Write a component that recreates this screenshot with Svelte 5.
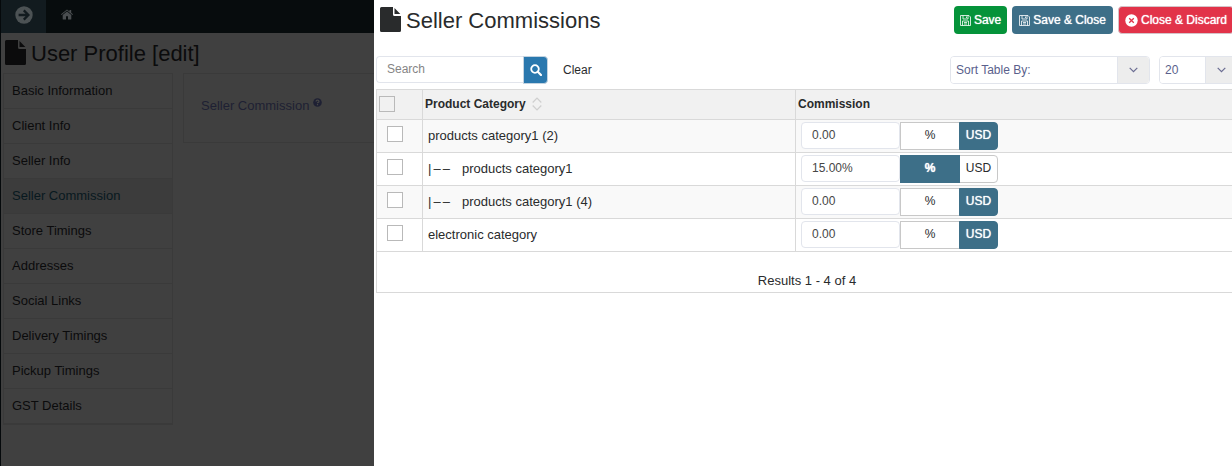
<script>
  const menu = ['Basic Information', 'Client Info', 'Seller Info', 'Seller Commission', 'Store Timings', 'Addresses', 'Social Links', 'Delivery Timings', 'Pickup Timings', 'GST Details'];
  let rows = $state([
    { name: 'products category1 (2)', child: false, value: '0.00', unit: 'USD' },
    { name: 'products category1', child: true, value: '15.00%', unit: '%' },
    { name: 'products category1 (4)', child: true, value: '0.00', unit: 'USD' },
    { name: 'electronic category', child: false, value: '0.00', unit: 'USD' }
  ]);
  let search = $state('');
</script>

{#snippet fileIcon()}
  <svg class="file" viewBox="0 0 21 25" aria-hidden="true">
    <path fill="currentColor" d="M1.500 0H13V7.500Q13 9 14.500 9H21V23.500Q21 25 19.500 25H1.500Q0 25 0 23.500V1.500Q0 0 1.500 0ZM14.500 1L20.300 7H14.500Z" />
  </svg>
{/snippet}

{#snippet disk()}
  <svg width="11" height="11" viewBox="0 0 11 11" fill="none" stroke="currentColor" aria-hidden="true">
    <path d="M.5.5H9L10.500 2V10.500H.5ZM3 .5V4H8V.5M6.500 1.500V3M2.500 10.500V6H8.500V10.500M4 7.500H7M4 9H7" stroke-width=".8" />
  </svg>
{/snippet}

{#snippet chevron()}
  <span class="arrow" aria-hidden="true">
    <svg width="9" height="6" viewBox="0 0 9 6" fill="none" stroke="#6a6c92" stroke-width="1.200"><path d="M.7.8L4.500 4.600L8.300.8" /></svg>
  </span>
{/snippet}

<div class="page">
  <div class="backdrop">
    <header class="topbar">
      <button class="toggle" aria-label="Toggle menu">
        <svg width="18" height="18" viewBox="0 0 18 18" aria-hidden="true">
          <circle cx="9" cy="9" r="8.700" fill="#4c5254" />
          <path d="M3.600 9H13M8.800 4.400L13.400 9L8.800 13.600" fill="none" stroke="#121b1f" stroke-width="2.300" />
        </svg>
      </button>
      <a class="home" href="#home" aria-label="Home">
        <svg width="12" height="11" viewBox="0 0 12 11" aria-hidden="true">
          <path fill="#4a4e50" d="M6 2.600L10.300 6.100V10Q10.300 10.500 9.800 10.500H7V7.300H5V10.500H2.200Q1.700 10.500 1.700 10V6.100ZM6 .4L8.500 2.400V1H10.200V3.800L12 5.300L11.400 6L6 1.600L.6 6L0 5.300Z" />
        </svg>
      </a>
    </header>
    <h1>{@render fileIcon()}User Profile [edit]</h1>
    <div class="columns">
      <nav>
        {#each menu as item}
          <a href="#section" class:active={item === 'Seller Commission'}>{item}</a>
        {/each}
      </nav>
      <section class="panel">
        <span>Seller Commission</span>
        <svg width="9" height="9" viewBox="0 0 9 9" aria-hidden="true">
          <circle cx="4.500" cy="4.500" r="4.300" fill="#1e2033" />
          <path d="M3 3.500Q3.100 2.200 4.500 2.200T6 3.400Q6 4.100 5.200 4.400Q4.500 4.700 4.500 5.300M4.500 6.100V7.300" fill="none" stroke="#454545" stroke-width="1.200" />
        </svg>
      </section>
    </div>
  </div>

  <main>
    <div class="sheet">
      <div class="head">
        <h1>{@render fileIcon()}Seller Commissions</h1>
        <div class="actions">
          <button class="save">{@render disk()}Save</button>
          <button class="teal">{@render disk()}Save &amp; Close</button>
          <button class="discard">
            <svg width="13" height="13" viewBox="0 0 13 13" aria-hidden="true">
              <circle cx="6.500" cy="6.500" r="6.200" fill="#fff" />
              <path d="M4.200 4.200L8.800 8.800M8.800 4.200L4.200 8.800" stroke="#e23349" stroke-width="1.300" />
            </svg>Close &amp; Discard
          </button>
        </div>
      </div>

      <div class="tools">
        <input class="search" type="text" placeholder="Search" aria-label="Search" bind:value={search} />
        <button class="go" aria-label="Run search">
          <svg width="12" height="12" viewBox="0 0 12 12" fill="none" stroke="#fff" aria-hidden="true">
            <circle cx="5" cy="5" r="3.800" stroke-width="1.800" /><path d="M7.800 7.800L11 11" stroke-width="2.200" stroke-linecap="round" />
          </svg>
        </button>
        <button class="clear" onclick={() => (search = '')}>Clear</button>
        <div class="select sort">
          <select aria-label="Sort table by"><option>Sort Table By:</option></select>
          {@render chevron()}
        </div>
        <div class="select count">
          <select aria-label="Rows per page"><option>20</option></select>
          {@render chevron()}
        </div>
      </div>

      <table>
        <thead>
          <tr>
            <th class="check"><input type="checkbox" aria-label="Select all" /></th>
            <th class="category">
              <span>Product Category
                <svg width="10" height="14" viewBox="0 0 10 14" fill="none" stroke="#cfcfcf" stroke-width="1.200" aria-hidden="true"><path d="M.7 5.500L5 1L9.300 5.500M.7 8.500L5 13L9.300 8.500" /></svg>
              </span>
            </th>
            <th>Commission</th>
          </tr>
        </thead>
        <tbody>
          {#each rows as row}
            <tr>
              <td class="check"><input type="checkbox" aria-label={row.name} /></td>
              <td class="category">{#if row.child}<span class="branch"><i>|</i><i>–</i><i>–</i></span>{/if}{row.name}</td>
              <td class="commission">
                <div class="group">
                  <input type="text" aria-label="Commission" bind:value={row.value} />
                  <button class="percent" class:on={row.unit === '%'} onclick={() => (row.unit = '%')}>%</button>
                  <button class="usd" class:on={row.unit === 'USD'} onclick={() => (row.unit = 'USD')}>USD</button>
                </div>
              </td>
            </tr>
          {/each}
        </tbody>
        <tfoot>
          <tr><td colspan="3">Results 1 - 4 of 4</td></tr>
        </tfoot>
      </table>
    </div>
  </main>
</div>

<style>
  :global(body) { background: #fff; }
  * { box-sizing: border-box; }
  .page {
    display: flex;
    min-height: 100vh;
    font-family: "Liberation Sans", Arial, sans-serif;
    font-size: 13px;
    color: #292b2c;
  }
  button, input, select { font: inherit; font-size: 12px; color: inherit; margin: 0; }
  button { border: 0; background: none; padding: 0; cursor: pointer; }
  a { text-decoration: none; color: inherit; }
  h1 {
    display: flex;
    align-items: flex-start;
    gap: 5px;
    margin: 0;
    font-size: 22px;
    line-height: 28px;
    font-weight: 400;
    white-space: nowrap;
  }
  .file { width: 21px; height: 25px; flex: none; }

  .backdrop { flex: 0 0 374px; background: #404040; border-left: 1px solid #05090b; color: #0b0b0c; overflow: hidden; }
  .topbar { display: flex; align-items: center; height: 33px; background: #070c0d; }
  .toggle { width: 45px; height: 33px; padding: 0 0 3px; background: #121b1f; display: flex; align-items: center; justify-content: center; }
  .home { margin: 0 15px; display: flex; padding-bottom: 4px; }
  .backdrop h1 { padding: 7px 4px 5px; }
  .columns { display: flex; align-items: flex-start; gap: 10px; padding-left: 2px; }
  nav { width: 170px; flex: none; border: 1px solid #3a3a3a; border-bottom-width: 2px; }
  nav a { display: block; height: 35px; padding: 0 8px; line-height: 34px; border-bottom: 1px solid #3a3a3a; }
  nav a:last-child { border-bottom: 0; height: 34px; }
  nav .active { background: #3c3c3c; color: #08191f; }
  .panel { flex: 1; display: flex; gap: 4px; height: 70px; padding: 24px 17px; border: 1px solid #3a3a3a; border-right: 0; color: #1e2033; line-height: 16px; white-space: nowrap; }

  main { flex: 1; min-width: 0; overflow: hidden; background: #fff; padding-left: 2px; }
  .sheet { margin-right: -6px; }
  .head { display: flex; justify-content: space-between; align-items: flex-start; padding: 6px 4px 0; height: 56px; }
  .head h1 { padding-top: 1px; }
  .actions { display: flex; gap: 5px; height: 28px; }
  .actions button { display: flex; align-items: center; gap: 3px; padding: 0 6px; border-radius: 4px; color: #fff; white-space: nowrap; text-shadow: 0 0 1px #fff; }
  .save { background: #05933a; }
  .actions .teal { background: #3d6f88; padding: 0 7px; }
  .actions .discard { background: #e23349; border: 1px solid #d5c3c8; }

  .tools { display: flex; height: 33px; align-items: flex-start; }
  .search { width: 147px; height: 27px; padding: 0 10px 2px; border: 1px solid #e2e5ec; border-right: 0; border-radius: 4px 0 0 4px; outline: 0; }
  .search::placeholder { color: #858585; opacity: 1; }
  .go { width: 25px; height: 28px; display: flex; align-items: center; justify-content: center; background: #2a78ae; border: 1px solid #c3d3e0; border-radius: 0 4px 4px 0; }
  .clear { height: 28px; margin: 0 auto 0 15px; }
  .select { display: grid; grid-template-columns: 1fr 32px; height: 28px; border: 1px solid #e2e5ec; border-radius: 4px; overflow: hidden; color: #5a5f8c; }
  .select select { grid-area: 1 / 1 / 2 / 3; appearance: none; border: 0; background: #fff; padding: 0 5px; outline: 0; }
  .arrow { grid-area: 1 / 2; z-index: 1; display: flex; align-items: center; justify-content: center; background: #ededed; border-left: 1px solid #e2e5ec; pointer-events: none; }
  .sort { width: 200px; margin-right: 9px; }
  .count { width: 79px; }

  table { width: 100%; border-collapse: collapse; table-layout: fixed; }
  th, td { border: 1px solid #d9d9d9; padding: 0 0 2px; text-align: left; height: 33px; }
  th { height: 30px; background: #f1f1f1; font-size: 12px; padding: 0 2px 2px; }
  th span { display: flex; align-items: center; gap: 6px; }
  th.check { width: 46px; }
  th.category { width: 373px; }
  tbody tr:nth-child(odd) { background: #f9f9f9; }
  td.check { padding-left: 10px; }
  td.category { padding-left: 5px; white-space: nowrap; }
  .branch { display: inline-flex; gap: 2px; width: 24px; margin-right: 10px; }
  .branch i { font-style: normal; }
  input[type="checkbox"] { appearance: none; display: block; width: 16px; height: 16px; border: 1px solid #b9b9b9; background: transparent; }
  td input[type="checkbox"] { background: #fff; margin-bottom: 2px; }
  td.commission { padding: 0 0 0 5px; }
  .group { display: flex; align-items: flex-start; height: 28px; }
  .group input { width: 99px; height: 27px; padding: 0 10px 2px; border: 1px solid #e2e5ec; border-radius: 4px; background: #fff; color: #464646; outline: 0; }
  .group button { height: 28px; padding-bottom: 2px; border: 1px solid #c8c8c8; background: #fff; }
  .percent { width: 60px; }
  .group .usd { width: 39px; margin-left: -1px; border-radius: 0 4px 4px 0; }
  .group .on { background: #3d6f88; border-color: #3d6f88; color: #fff; text-shadow: 0 0 1px #fff; }
  .percent.on { font-weight: 700; position: relative; }
  tfoot td { height: 41px; padding-top: 18px; text-align: center; }
</style>
